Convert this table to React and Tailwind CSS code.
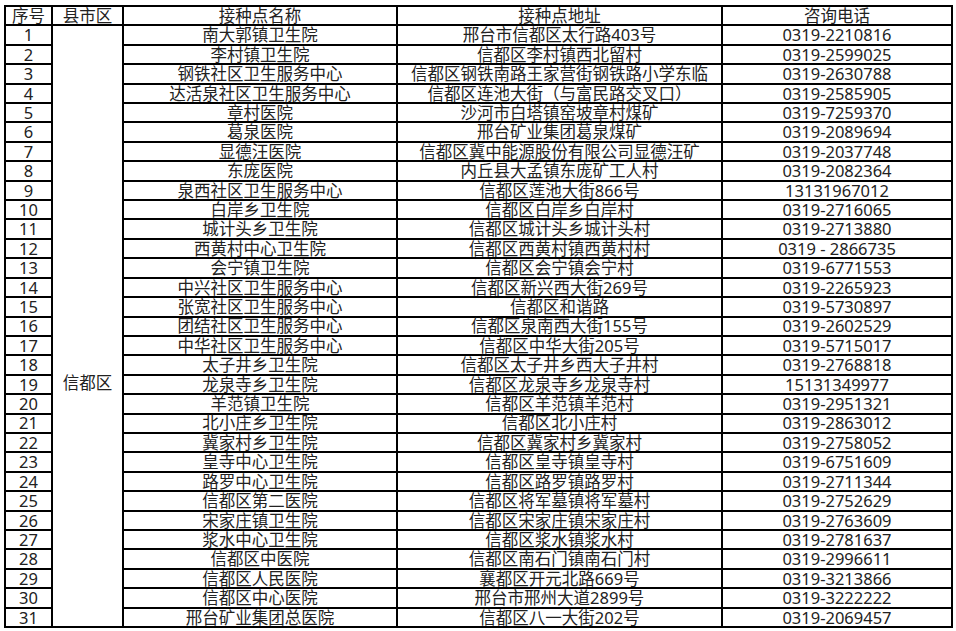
import React from "react";

const rows = [
  ["南大郭镇卫生院", "邢台市信都区太行路403号", "0319-2210816"],
  ["李村镇卫生院", "信都区李村镇西北留村", "0319-2599025"],
  ["钢铁社区卫生服务中心", "信都区钢铁南路王家营街钢铁路小学东临", "0319-2630788"],
  ["达活泉社区卫生服务中心", "信都区连池大街（与富民路交叉口）", "0319-2585905"],
  ["章村医院", "沙河市白塔镇窑坡章村煤矿", "0319-7259370"],
  ["葛泉医院", "邢台矿业集团葛泉煤矿", "0319-2089694"],
  ["显德汪医院", "信都区冀中能源股份有限公司显德汪矿", "0319-2037748"],
  ["东庞医院", "内丘县大孟镇东庞矿工人村", "0319-2082364"],
  ["泉西社区卫生服务中心", "信都区莲池大街866号", "13131967012"],
  ["白岸乡卫生院", "信都区白岸乡白岸村", "0319-2716065"],
  ["城计头乡卫生院", "信都区城计头乡城计头村", "0319-2713880"],
  ["西黄村中心卫生院", "信都区西黄村镇西黄村村", "0319 - 2866735"],
  ["会宁镇卫生院", "信都区会宁镇会宁村", "0319-6771553"],
  ["中兴社区卫生服务中心", "信都区新兴西大街269号", "0319-2265923"],
  ["张宽社区卫生服务中心", "信都区和谐路", "0319-5730897"],
  ["团结社区卫生服务中心", "信都区泉南西大街155号", "0319-2602529"],
  ["中华社区卫生服务中心", "信都区中华大街205号", "0319-5715017"],
  ["太子井乡卫生院", "信都区太子井乡西大子井村", "0319-2768818"],
  ["龙泉寺乡卫生院", "信都区龙泉寺乡龙泉寺村", "15131349977"],
  ["羊范镇卫生院", "信都区羊范镇羊范村", "0319-2951321"],
  ["北小庄乡卫生院", "信都区北小庄村", "0319-2863012"],
  ["冀家村乡卫生院", "信都区冀家村乡冀家村", "0319-2758052"],
  ["皇寺中心卫生院", "信都区皇寺镇皇寺村", "0319-6751609"],
  ["路罗中心卫生院", "信都区路罗镇路罗村", "0319-2711344"],
  ["信都区第二医院", "信都区将军墓镇将军墓村", "0319-2752629"],
  ["宋家庄镇卫生院", "信都区宋家庄镇宋家庄村", "0319-2763609"],
  ["浆水中心卫生院", "信都区浆水镇浆水村", "0319-2781637"],
  ["信都区中医院", "信都区南石门镇南石门村", "0319-2996611"],
  ["信都区人民医院", "襄都区开元北路669号", "0319-3213866"],
  ["信都区中心医院", "邢台市邢州大道2899号", "0319-3222222"],
  ["邢台矿业集团总医院", "信都区八一大街202号", "0319-2069457"],
];

const cell =
  "bg-white flex items-center justify-center whitespace-nowrap leading-none pt-[1px]";

export default function App() {
  return (
    <div
      className="w-[956px] h-[631px] bg-white pt-[5px] pl-[4px] text-[16.5px] text-[#222222]"
      style={{ fontFamily: '"Noto Sans", "Noto Sans CJK SC", sans-serif' }}
    >
      <div className="w-[949px] h-[623px] bg-black p-[2px] grid gap-[2px] grid-cols-[45px_69px_272px_323px_228px] grid-rows-[repeat(32,minmax(0,1fr))]">
        <div className={cell}>序号</div>
        <div className={cell}>县市区</div>
        <div className={cell}>接种点名称</div>
        <div className={cell}>接种点地址</div>
        <div className={cell}>咨询电话</div>
        {rows.map((r, i) => (
          <React.Fragment key={i}>
            <div className={cell}>{i + 1}</div>
            {i === 0 && (
              <div className="bg-white row-[span_31/span_31] flex flex-col items-center justify-start pt-[349px] leading-none">
                信都区
              </div>
            )}
            <div className={cell}>{r[0]}</div>
            <div className={cell}>{r[1]}</div>
            <div className={cell}>{r[2]}</div>
          </React.Fragment>
        ))}
      </div>
    </div>
  );
}
